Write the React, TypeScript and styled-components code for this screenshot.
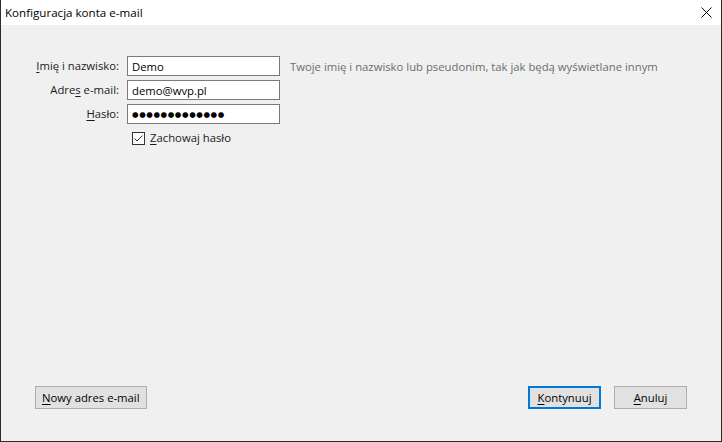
import React from "react";
import styled, { createGlobalStyle } from "styled-components";

const Global = createGlobalStyle`
  html, body { margin: 0; padding: 0; background: #f0f0f0; }
  body { font-family: "Segoe UI", "Open Sans", "Noto Sans", sans-serif; font-size: 11.3px; color: #1a1a1a; }
  * { box-sizing: border-box; }
`;

const Window = styled.div`
  width: 722px;
  height: 442px;
  display: flex;
  flex-direction: column;
  border: 1px solid #2b2b2b;
  border-top: none;
  background: #f0f0f0;
`;

const TitleBar = styled.div`
  height: 25px;
  background: #ffffff;
  display: flex;
  align-items: center;
  justify-content: space-between;
  padding-left: 4px;
  padding-right: 9px;
  font-size: 11.6px;
  color: #000;
`;

const TitleText = styled.span`
  line-height: 16px;
`;

const CloseIcon = styled.svg`
  width: 11px;
  height: 11px;
  display: block;
`;

const Body = styled.div`
  flex: 1;
  display: flex;
  flex-direction: column;
  justify-content: space-between;
  padding: 31px 34px 32px 34px;
`;

const Form = styled.div`
  display: grid;
  grid-template-columns: 84px 153px auto;
  column-gap: 8px;
  row-gap: 4px;
  align-items: center;
`;

const Label = styled.label`
  text-align: right;
  white-space: nowrap;
  line-height: 16px;
`;

const Field = styled.input`
  height: 20px;
  width: 153px;
  border: 1px solid #7a7a7a;
  background: #fff;
  padding: 0 4px;
  font-family: inherit;
  font-size: 11.3px;
  color: #000;
  outline: none;
`;

const DotsField = styled(Field)`
  font-family: "DejaVu Sans", sans-serif;
  font-size: 7.5px;
  letter-spacing: 0.6px;
  padding-left: 4px;
`;

const Hint = styled.span`
  color: #6d6d6d;
  white-space: nowrap;
  padding-left: 2px;
`;

const CheckRow = styled.label`
  grid-column: 2 / span 2;
  display: flex;
  align-items: center;
  gap: 5px;
  margin-top: 2px;
  padding-left: 5px;
  line-height: 16px;
`;

const CheckBox = styled.span`
  width: 13px;
  height: 13px;
  border: 1px solid #333;
  background: #fff;
  display: flex;
  align-items: center;
  justify-content: center;
`;

const Footer = styled.div`
  display: flex;
  align-items: center;
  justify-content: space-between;
`;

const ButtonGroup = styled.div`
  display: flex;
  gap: 13px;
`;

const Button = styled.button<{ $primary?: boolean }>`
  height: 23px;
  min-width: 73px;
  padding: 0 6px;
  background: #e1e1e1;
  border: ${(p) => (p.$primary ? "2px solid #0078d7" : "1px solid #adadad")};
  font-family: inherit;
  font-size: 11.3px;
  color: #000;
  line-height: 16px;
`;

const U = styled.u`
  text-decoration: underline;
  text-underline-offset: 2px;
`;

export default function App() {
  return (
    <>
      <Global />
      <Window>
        <TitleBar>
          <TitleText>Konfiguracja konta e-mail</TitleText>
          <CloseIcon viewBox="0 0 11 11">
            <path d="M0.5 0.5 L10.5 10.5 M10.5 0.5 L0.5 10.5" stroke="#000" strokeWidth="1" fill="none" />
          </CloseIcon>
        </TitleBar>
        <Body>
          <Form>
            <Label>
              <U>I</U>mię i nazwisko:
            </Label>
            <Field defaultValue="Demo" />
            <Hint>Twoje imię i nazwisko lub pseudonim, tak jak będą wyświetlane innym</Hint>

            <Label>
              Adre<U>s</U> e-mail:
            </Label>
            <Field defaultValue="demo@wvp.pl" />
            <span />

            <Label>
              <U>H</U>asło:
            </Label>
            <DotsField readOnly value="●●●●●●●●●●●●●" />
            <span />

            <span />
            <CheckRow>
              <CheckBox>
                <svg width="11" height="11" viewBox="0 0 11 11">
                  <path d="M1.5 5.5 L4 8 L9.5 2.5" stroke="#333" strokeWidth="1" fill="none" />
                </svg>
              </CheckBox>
              <span>
                <U>Z</U>achowaj hasło
              </span>
            </CheckRow>
          </Form>
          <Footer>
            <Button>
              <U>N</U>owy adres e-mail
            </Button>
            <ButtonGroup>
              <Button $primary>
                <U>K</U>ontynuuj
              </Button>
              <Button>
                <U>A</U>nuluj
              </Button>
            </ButtonGroup>
          </Footer>
        </Body>
      </Window>
    </>
  );
}
